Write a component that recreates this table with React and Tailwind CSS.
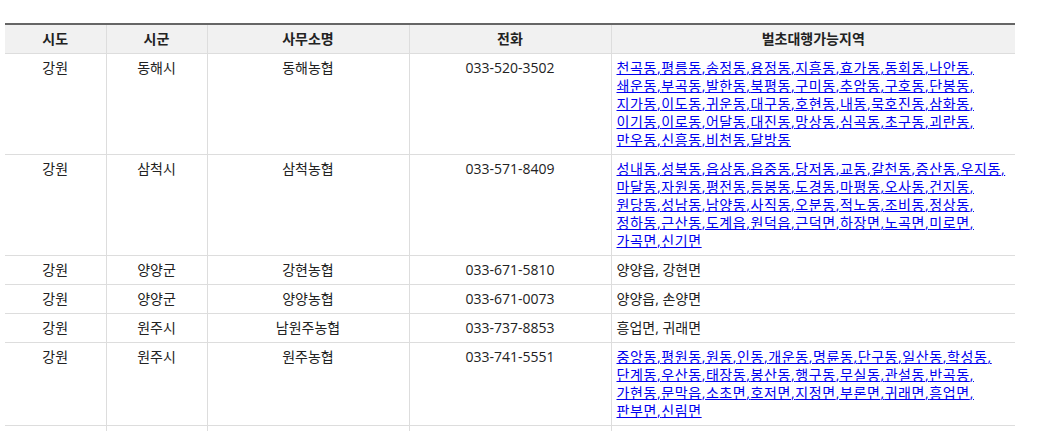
const rows = [
  {
    sido: '강원', sigun: '동해시', office: '동해농협', tel: '033-520-3502',
    areas: ['천곡동', '평릉동', '송정동', '용정동', '지흥동', '효가동', '동회동', '나안동', '쇄운동', '부곡동', '발한동', '북평동', '구미동', '추암동', '구호동', '단봉동', '지가동', '이도동', '귀운동', '대구동', '호현동', '내동', '묵호진동', '삼화동', '이기동', '이로동', '어달동', '대진동', '망상동', '심곡동', '초구동', '괴란동', '만우동', '신흥동', '비천동', '달방동'],
  },
  {
    sido: '강원', sigun: '삼척시', office: '삼척농협', tel: '033-571-8409',
    areas: ['성내동', '성북동', '읍상동', '읍중동', '당저동', '교동', '갈천동', '증산동', '우지동', '마달동', '자원동', '평전동', '등봉동', '도경동', '마평동', '오사동', '건지동', '원당동', '성남동', '남양동', '사직동', '오분동', '적노동', '조비동', '정상동', '정하동', '근산동', '도계읍', '원덕읍', '근덕면', '하장면', '노곡면', '미로면', '가곡면', '신기면'],
  },
  { sido: '강원', sigun: '양양군', office: '강현농협', tel: '033-671-5810', text: '양양읍, 강현면' },
  { sido: '강원', sigun: '양양군', office: '양양농협', tel: '033-671-0073', text: '양양읍, 손양면' },
  { sido: '강원', sigun: '원주시', office: '남원주농협', tel: '033-737-8853', text: '흥업면, 귀래면' },
  {
    sido: '강원', sigun: '원주시', office: '원주농협', tel: '033-741-5551',
    areas: ['중앙동', '평원동', '원동', '인동', '개운동', '명륜동', '단구동', '일산동', '학성동', '단계동', '우산동', '태장동', '봉산동', '행구동', '무실동', '관설동', '반곡동', '가현동', '문막읍', '소초면', '호저면', '지정면', '부론면', '귀래면', '흥업면', '판부면', '신림면'],
  },
];

const th = 'border-b border-l border-[#dddddd] first:border-l-0 py-[5px] px-[5px] text-center font-bold leading-[18px]';
const td = 'border-b border-l border-[#dddddd] first:border-l-0 py-[5px] px-[5px] align-top leading-[18px]';

export default function App() {
  return (
    <div className="bg-white min-h-screen pt-[23px] px-[5px] text-[14px] text-[#222]" style={{ fontFamily: '"Open Sans", "Noto Sans CJK KR", sans-serif' }}>
      <table className="w-[1010px] table-fixed border-collapse border-t-2 border-t-[#666666]">
        <colgroup>
          <col className="w-[10%]" />
          <col className="w-[10%]" />
          <col className="w-[20%]" />
          <col className="w-[20%]" />
          <col className="w-[40%]" />
        </colgroup>
        <thead>
          <tr className="bg-[#f1f1f1]">
            <th className={th}>시도</th>
            <th className={th}>시군</th>
            <th className={th}>사무소명</th>
            <th className={th}>전화</th>
            <th className={th}>벌초대행가능지역</th>
          </tr>
        </thead>
        <tbody>
          {rows.map((r, i) => (
            <tr key={i}>
              <td className={`${td} text-center`}>{r.sido}</td>
              <td className={`${td} text-center`}>{r.sigun}</td>
              <td className={`${td} text-center`}>{r.office}</td>
              <td className={`${td} text-center`}>{r.tel}</td>
              <td className={`${td} text-left`}>
                {r.areas
                  ? r.areas.map((a, j) => (
                      <a key={j} href="#" className="inline-block text-[#0000ee] underline tracking-[0.6px]">
                        {a}{j < r.areas.length - 1 ? ',' : ''}
                      </a>
                    ))
                  : r.text}
              </td>
            </tr>
          ))}
          {/* 다음 행 (화면 밖으로 잘림) */}
          <tr>
            <td className={td}>&nbsp;</td>
            <td className={td}>&nbsp;</td>
            <td className={td}>&nbsp;</td>
            <td className={td}>&nbsp;</td>
            <td className={td}>&nbsp;</td>
          </tr>
        </tbody>
      </table>
    </div>
  );
}
